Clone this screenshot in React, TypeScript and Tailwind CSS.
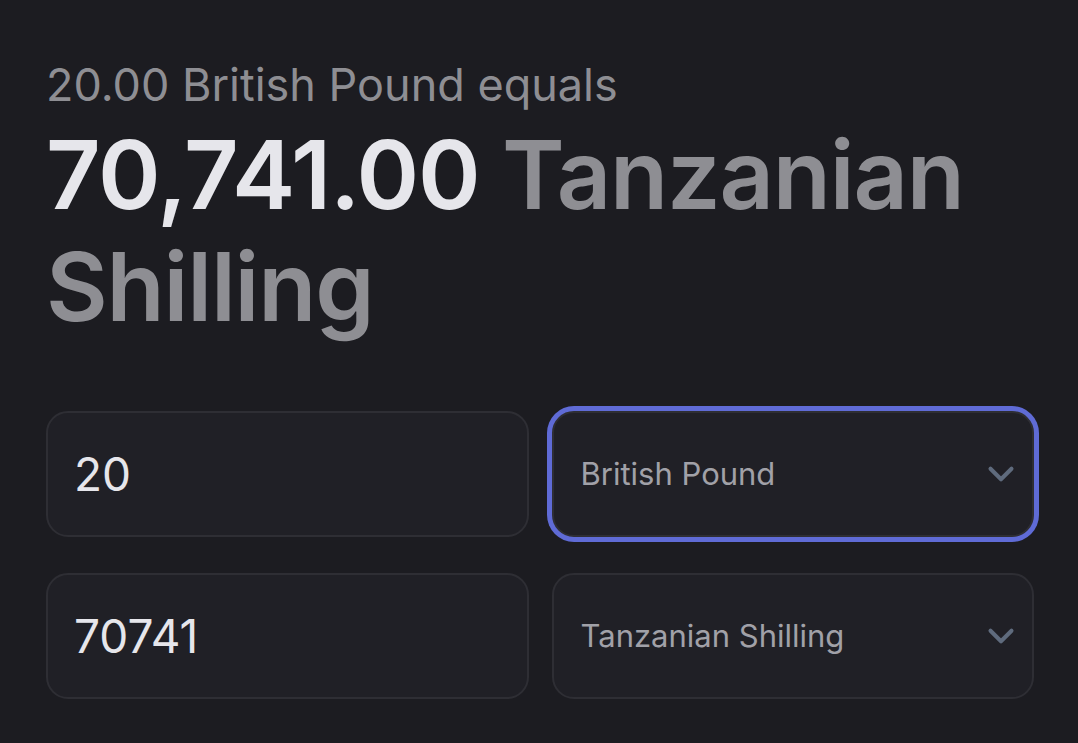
import { ChevronDown } from 'lucide-react'

function CurrencySelect({ label, focused }: { label: string; focused?: boolean }) {
  return (
    <div
      className={
        focused
          ? 'flex h-[126px] items-center justify-between rounded-[22px] border-2 border-[#2e2e34] bg-[#202026] pl-[27px] pr-[10px] ring-[5px] ring-[#5f6bd6]'
          : 'flex h-[126px] items-center justify-between rounded-[22px] border-2 border-[#2e2e34] bg-[#202026] pl-[27px] pr-[10px]'
      }
    >
      <span className="text-[31px] text-[#a1a1a8]">{label}</span>
      <ChevronDown className="h-[42px] w-[42px] text-[#5f6b7d]" strokeWidth={2.3} />
    </div>
  )
}

function AmountInput({ value }: { value: string }) {
  return (
    <div className="flex h-[126px] items-center rounded-[22px] border-2 border-[#2e2e34] bg-[#202026] px-[26px]">
      <span className="text-[46px] text-[#e6e6eb]">{value}</span>
    </div>
  )
}

export default function App() {
  return (
    <div
      className="min-h-[743px] bg-[#1c1c21] pl-[46px] pr-[44px] pt-[57px]"
      style={{ fontFamily: 'Inter, "Noto Sans", sans-serif' }}
    >
      <p className="text-[45px] leading-[56px] text-[#8e8e93]">20.00 British Pound equals</p>
      <h1 className="mt-[6px] text-[95px] font-semibold leading-[112px] tracking-[-1.2px] text-[#8e8e93]">
        <span className="text-[#e6e6eb]">70,741.00</span> Tanzanian Shilling
      </h1>
      <div className="mt-[68px] grid grid-cols-2 gap-x-[23px] gap-y-[36px]">
        <AmountInput value="20" />
        <CurrencySelect label="British Pound" focused />
        <AmountInput value="70741" />
        <CurrencySelect label="Tanzanian Shilling" />
      </div>
    </div>
  )
}
